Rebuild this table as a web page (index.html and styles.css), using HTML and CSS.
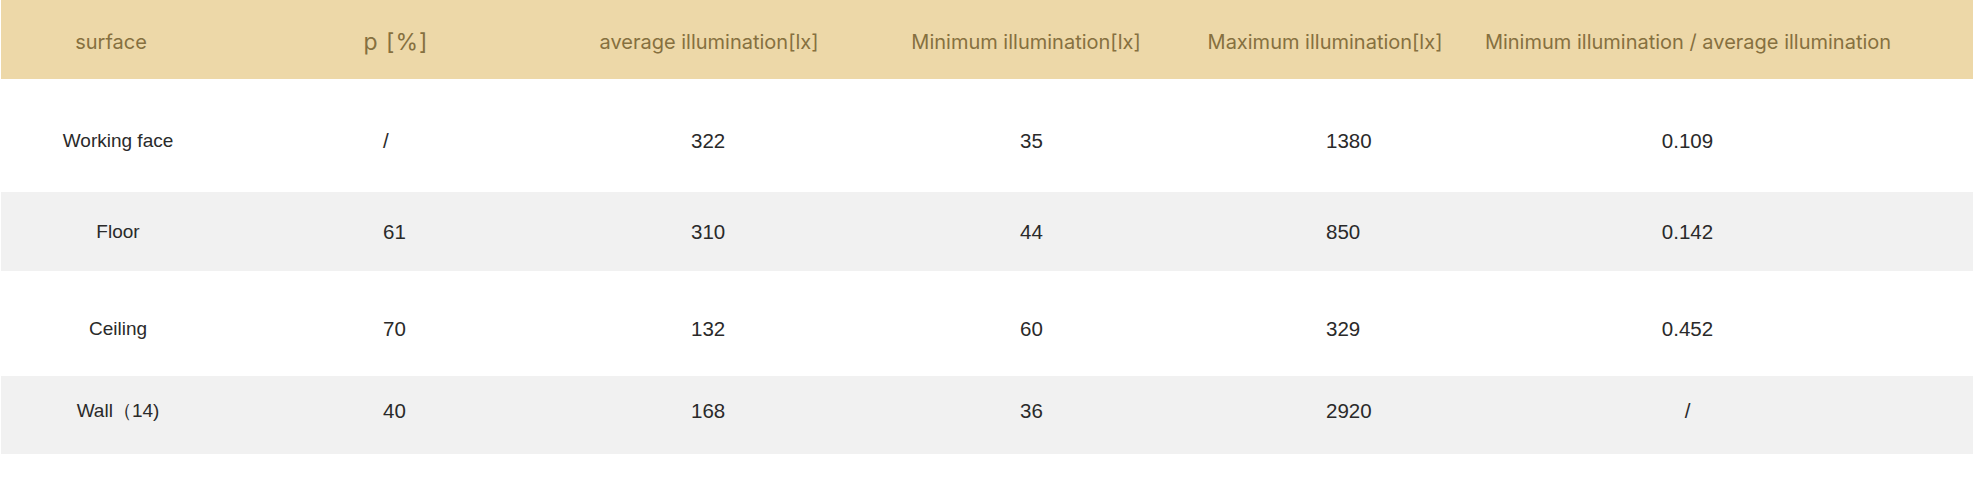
FILE: index.html
```html
<!DOCTYPE html>
<html lang="en">
<head>
<meta charset="utf-8">
<title>Illumination table</title>
<link rel="stylesheet" href="styles.css">
</head>
<body>
<div class="table">
  <div class="row head">
    <div class="cell c1">surface</div>
    <div class="cell c2"><span class="rho">p [%]</span></div>
    <div class="cell c3">average illumination[lx]</div>
    <div class="cell c4">Minimum illumination[lx]</div>
    <div class="cell c5">Maximum illumination[lx]</div>
    <div class="cell c6">Minimum illumination / average illumination</div>
  </div>
  <div class="row body r1">
    <div class="cell c1">Working face</div>
    <div class="cell c2">/</div>
    <div class="cell c3">322</div>
    <div class="cell c4">35</div>
    <div class="cell c5">1380</div>
    <div class="cell c6">0.109</div>
  </div>
  <div class="row body r2 alt">
    <div class="cell c1">Floor</div>
    <div class="cell c2">61</div>
    <div class="cell c3">310</div>
    <div class="cell c4">44</div>
    <div class="cell c5">850</div>
    <div class="cell c6">0.142</div>
  </div>
  <div class="row body r3">
    <div class="cell c1">Ceiling</div>
    <div class="cell c2">70</div>
    <div class="cell c3">132</div>
    <div class="cell c4">60</div>
    <div class="cell c5">329</div>
    <div class="cell c6">0.452</div>
  </div>
  <div class="row body r4 alt">
    <div class="cell c1">Wall（14)</div>
    <div class="cell c2">40</div>
    <div class="cell c3">168</div>
    <div class="cell c4">36</div>
    <div class="cell c5">2920</div>
    <div class="cell c6">/</div>
  </div>
</div>
</body>
</html>
```
FILE: styles.css
```css
html, body {
  margin: 0;
  padding: 0;
  background: #ffffff;
}

.table {
  width: 1972px;
  margin-left: 1px;
}

.row {
  display: grid;
  grid-template-columns: 220px 350px 276px 358px 240px 528px;
  align-items: center;
  box-sizing: border-box;
}

.cell {
  white-space: nowrap;
  line-height: 24px;
}

.head {
  height: 79px;
  background: #edd8a8;
  color: #86703f;
  font-family: Inter, "Noto Sans", sans-serif;
  font-size: 20px;
  padding-top: 5px;
}

.head .cell {
  text-align: center;
}

.head .c6 {
  padding-right: 42px;
}

.rho {
  font-size: 23px;
  letter-spacing: 1px;
}

.body {
  color: #2a2a2a;
  font-family: "Liberation Sans", Arial, sans-serif;
  font-size: 20.5px;
}

.body .c1 {
  font-size: 19px;
  text-align: center;
  padding-left: 14px;
}

.body .c2 { padding-left: 162px; }
.body .c3 { padding-left: 120px; }
.body .c4 { padding-left: 173px; }
.body .c5 { padding-left: 121px; }
.body .c6 {
  text-align: center;
  padding-right: 43px;
}

.alt {
  background: #f1f1f1;
}

.r1 {
  height: 113px;
  padding-top: 50px;
  padding-bottom: 39px;
}

.r2 {
  height: 79px;
}

.r3 {
  height: 105px;
  padding-top: 46px;
  padding-bottom: 35px;
}

.r4 {
  height: 78px;
  padding-top: 23px;
  padding-bottom: 31px;
}
```
